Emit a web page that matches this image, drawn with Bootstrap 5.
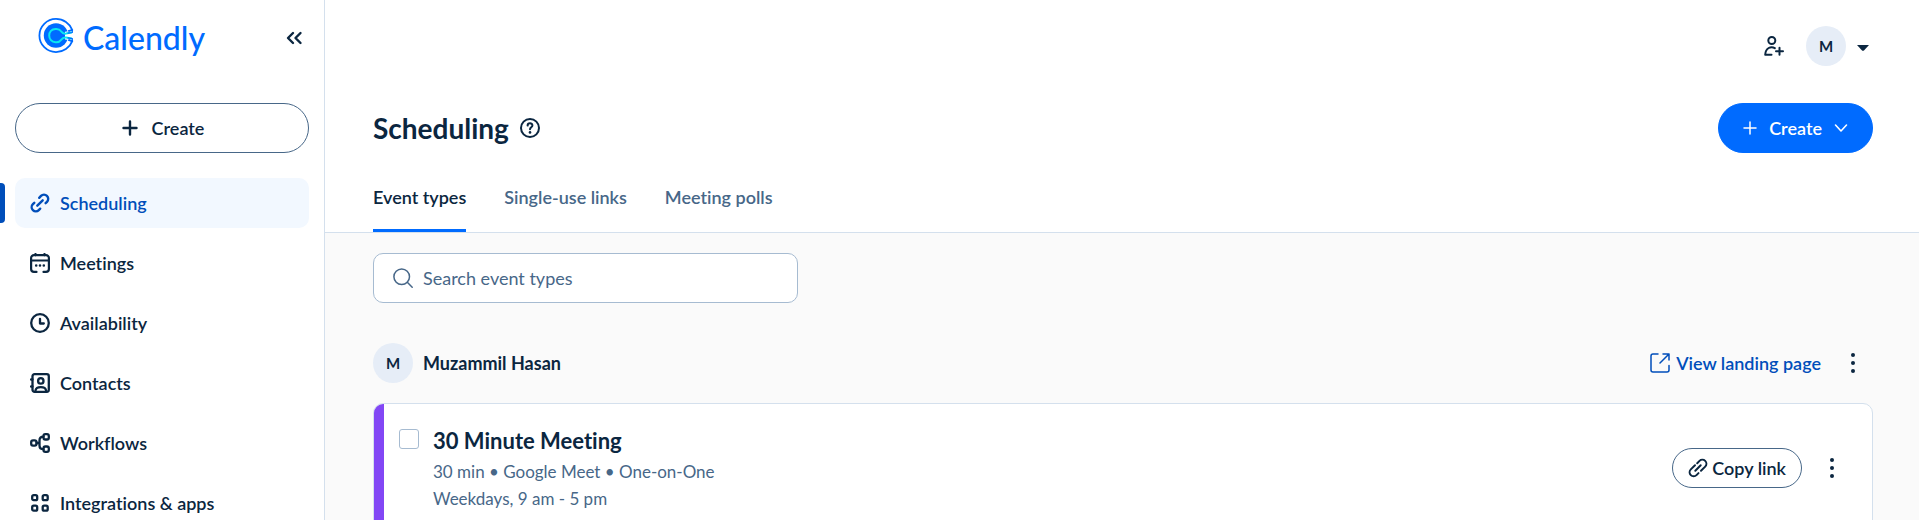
<!DOCTYPE html>
<html lang="en">
<head>
<meta charset="utf-8">
<meta name="viewport" content="width=device-width, initial-scale=1">
<title>Scheduling - Calendly</title>
<link rel="stylesheet" href="https://cdn.jsdelivr.net/npm/bootstrap@5.3.0/dist/css/bootstrap.min.css">
<style>
:root { --navy: #0b2640; --slate: #476788; --blue: #006bff; --deep: #004eba; --line: #d4e0ed; }
body { font-family: Lato, "Liberation Sans", sans-serif; font-size: 18px; line-height: 24px; font-variant-ligatures: none; color: var(--navy); background: #fff; }
svg { display: block; flex: none; fill: none; stroke: currentColor; stroke-linecap: round; stroke-linejoin: round; }
.sidebar { width: 325px; border-right: 1px solid var(--line); padding: 0 15px; }
.brand-row { height: 103px; padding: 18px 6px 0 23px; }
.brand-name { color: var(--blue); font-size: 32px; line-height: 40px; font-weight: 500; text-decoration: none; gap: 8px; }
.collapse-btn, .icon-btn { color: var(--navy); padding: 0; border: 0; background: none; }
.collapse-btn { margin-top: 12px; }
.btn-round { height: 50px; border-radius: 25px; border: 1px solid var(--slate); color: var(--navy); background: #fff; font-size: 18px; font-weight: 600; }
.btn-round.btn-small { height: 40px; gap: 4px; padding: 0 15px; }
.btn-round.btn-blue { background: var(--blue); border-color: var(--blue); color: #fff; padding: 0 24px; gap: 12px; }
.side-nav { margin-top: 25px; gap: 10px; }
.side-nav .nav-link { height: 50px; padding: 0 15px; gap: 10px; color: var(--navy); font-weight: 600; border-radius: 10px; position: relative; }
.side-nav .nav-link.active { background: #f2f8ff; color: var(--deep); }
.side-nav .nav-link.active::before { content: ""; position: absolute; left: -15px; top: 5px; width: 5px; height: 40px; background: var(--deep); border-radius: 0 4px 4px 0; }
.gutter { padding-left: 48px; padding-right: 46px; }
.top-head { border-bottom: 1px solid var(--line); }
.account { padding-top: 26px; padding-bottom: 37px; gap: 22px; }
.initial { width: 40px; height: 40px; border-radius: 50%; background: #e6edf7; font-size: 15px; font-weight: 700; color: var(--navy); }
.page-title { font-size: 28px; line-height: 32px; font-weight: 700; }
.title-group, .owner-name { gap: 10px; }
.tab-row { gap: 38px; margin-top: 32px; }
.tab-row .nav-link { padding: 0 0 20px; border-bottom: 3px solid transparent; color: var(--slate); font-weight: 600; }
.tab-row .nav-link.active { color: var(--navy); border-color: var(--blue); }
.page-body { background: #fafafa; padding-top: 20px; }
.search-box { width: 425px; max-width: 100%; height: 50px; border: 1px solid #a6bbd1; border-radius: 10px; background: #fff; padding: 0 19px; gap: 10px; color: var(--slate); }
.search-box input { border: 0; outline: 0; background: none; min-width: 0; color: var(--navy); }
.search-box input::placeholder { color: var(--slate); opacity: 1; }
.owner-row { margin-top: 40px; margin-bottom: 20px; }
.landing { color: var(--deep); font-weight: 600; text-decoration: none; gap: 6px; margin-right: 22px; }
.event-item { border: 1px solid var(--line); border-radius: 10px; background: #fff; height: 130px; overflow: hidden; }
.event-stripe { width: 10px; background: #8247f5; }
.event-check { width: 20px; height: 20px; margin: 25px 14px 0 15px; border: 1px solid #a6bbd1; border-radius: 3px; background: #fff; appearance: none; }
.event-title { font-size: 22px; line-height: 28px; font-weight: 700; margin: 23px 0 3px; }
.event-meta { color: var(--slate); font-size: 17px; line-height: 27px; margin: 0; }
</style>
</head>
<body>
<div class="d-flex vh-100 overflow-hidden">
  <aside class="sidebar flex-shrink-0 overflow-hidden">
    <div class="brand-row d-flex justify-content-between align-items-start">
      <a class="brand-name d-flex align-items-start" href="#">
        <svg width="37" height="36" viewBox="0 0 37 36" aria-hidden="true">
          <circle cx="18" cy="17.5" r="12.2" fill="#006bff" stroke="none"/>
          <path d="M27 13.800L36 12.500V22.500L27 21.500Z" fill="#fff" stroke="none"/>
          <path d="M31 12.900L34.300 12C31.800 5.500 25.300 .9 18 .9A16.600 16.600 0 0 0 18 34.100C25.300 34.100 31.800 29.500 34.300 23.100L31 22.100" stroke="#006bff" stroke-width="1.800"/>
          <path d="M33.500 14.500L28 15.600C25.500 16 24.500 15.200 23.100 13.300C22 11.700 20.500 11 18.500 11H17.500C13.600 11 11.200 14 11.200 17.500S13.600 24.200 17.500 24.200H18.500C20.500 24.200 22 23.500 23.100 21.900C24.500 20 25.500 19.200 28 19.600L33.500 20.600" stroke="#0ae8f0" stroke-width="2"/>
          <path d="M31 12.900L34.300 12V14.500L30 15.200M31 22.100L34.300 23.100V20.600L30 19.900" stroke="#006bff" stroke-width="1.200"/>
        </svg>
        <span>Calendly</span>
      </a>
      <button class="collapse-btn" type="button" aria-label="Collapse sidebar">
        <svg width="18" height="16" viewBox="0 0 18 16" stroke-width="2.400"><path d="M8 3L3 8L8 13M15.500 3L10.500 8L15.500 13"/></svg>
      </button>
    </div>
    <button class="btn btn-round w-100 d-flex align-items-center justify-content-center gap-2" type="button">
      <svg width="20" height="20" viewBox="0 0 20 20" stroke-width="2.400"><path d="M10 3.500V16.500M3.500 10H16.500"/></svg>
      <span class="ms-1">Create</span>
    </button>
    <nav class="side-nav nav flex-column flex-nowrap">
      <a class="nav-link active d-flex align-items-center" href="#">
        <svg width="20" height="20" viewBox="0 0 20 20" stroke-width="2.400"><path d="M7.300 12.700L12.700 7.300M9.200 4.800L11 2.900A4 4 0 0 1 17 8.800L15.600 10.200M4.300 9.800L2.900 11.200A4 4 0 0 0 8.800 17.100L10.200 15.700"/></svg>
        <span>Scheduling</span>
      </a>
      <a class="nav-link d-flex align-items-center" href="#">
        <svg width="20" height="20" viewBox="0 0 20 20" stroke-width="2.200"><path d="M6.500 18.900H4A2.900 2.900 0 0 1 1.100 16V5A2.900 2.900 0 0 1 4 2.100H16A2.900 2.900 0 0 1 18.900 5V16A2.900 2.900 0 0 1 16 18.900H13.500M1 7.500H19M5.500 1V2.500M14.500 1V2.500"/><path d="M6.200 12.500h.01M10 12.500h.01M13.800 12.500h.01" stroke-width="2.600"/></svg>
        <span>Meetings</span>
      </a>
      <a class="nav-link d-flex align-items-center" href="#">
        <svg width="20" height="20" viewBox="0 0 20 20" stroke-width="2.300"><circle cx="10" cy="10" r="8.800"/><path d="M10 5.800V10.500H13.800"/></svg>
        <span>Availability</span>
      </a>
      <a class="nav-link d-flex align-items-center" href="#">
        <svg width="20" height="20" viewBox="0 0 20 20" stroke-width="2.300"><rect x="2.500" y="1.200" width="16.300" height="17.600" rx="2"/><circle cx="10.800" cy="7.900" r="2.700"/><path d="M5.500 17.500C6.300 13 15.300 13 16.100 17.500M1.100 6.500H2.500M1.100 13.500H2.500"/></svg>
        <span>Contacts</span>
      </a>
      <a class="nav-link d-flex align-items-center" href="#">
        <svg width="20" height="20" viewBox="0 0 20 20" stroke-width="2.300"><rect x="1.200" y="7.300" width="5.300" height="5.300" rx="1.800"/><rect x="13.500" y="1.200" width="5.300" height="5.300" rx="1.800"/><rect x="13.500" y="13.500" width="5.300" height="5.300" rx="1.800"/><path d="M6.500 10H9M13.500 3.700C10.500 3.700 9.500 5 9.500 7.500V12.500C9.500 15 10.500 16.200 13.500 16.200"/></svg>
        <span>Workflows</span>
      </a>
      <a class="nav-link d-flex align-items-center" href="#">
        <svg width="20" height="20" viewBox="0 0 20 20" stroke-width="2.300"><rect x="2.200" y="2.200" width="5" height="5" rx="1.500"/><rect x="12.700" y="2.200" width="5" height="5" rx="1.500"/><rect x="2.200" y="12.700" width="5" height="5" rx="1.500"/><rect x="12.700" y="12.700" width="5" height="5" rx="1.500"/></svg>
        <span>Integrations &amp; apps</span>
      </a>
    </nav>
  </aside>

  <main class="flex-grow-1 d-flex flex-column overflow-hidden">
    <header class="top-head gutter flex-shrink-0">
      <div class="account d-flex justify-content-end align-items-center">
        <button class="icon-btn" type="button" aria-label="Invite user">
          <svg width="20" height="20" viewBox="0 0 20 20" stroke-width="2"><circle cx="7.800" cy="4.500" r="3.500"/><path d="M10.800 12.200C7 9.700 1.500 12 1.200 18.800H7.500M15.500 11.800V18.800M12 15.300H19"/></svg>
        </button>
        <button class="icon-btn d-flex align-items-center me-1" type="button" aria-label="Account menu">
          <span class="initial d-flex align-items-center justify-content-center me-2">M</span>
          <svg width="15" height="12" viewBox="0 0 15 12"><path d="M3 5H15L10.200 10.300Q9 11.300 7.800 10.300Z" fill="currentColor" stroke="none"/></svg>
        </button>
      </div>
      <div class="d-flex justify-content-between align-items-center">
        <div class="title-group d-flex align-items-center">
          <h1 class="page-title mb-0">Scheduling</h1>
          <svg width="22" height="22" viewBox="0 0 22 22" stroke-width="2"><circle cx="11" cy="11" r="9"/><path d="M8.600 8.600C8.700 5.600 13.400 5.600 13.400 8.500C13.400 10.300 11 10.300 11 12.300"/><path d="M11 15.400h.01" stroke-width="2.600"/></svg>
        </div>
        <button class="btn btn-round btn-blue d-flex align-items-center" type="button">
          <svg width="14" height="14" viewBox="0 0 14 14" stroke-width="1.500"><path d="M7 1V13M1 7H13"/></svg>
          <span>Create</span>
          <svg width="14" height="14" viewBox="0 0 14 14" stroke-width="1.600"><path d="M1.500 4L7 10L12.500 4"/></svg>
        </button>
      </div>
      <nav class="tab-row nav">
        <a class="nav-link active" href="#">Event types</a>
        <a class="nav-link" href="#">Single-use links</a>
        <a class="nav-link" href="#">Meeting polls</a>
      </nav>
    </header>

    <section class="page-body gutter flex-grow-1 overflow-hidden">
      <label class="search-box d-flex align-items-center">
        <svg width="20" height="20" viewBox="0 0 20 20" stroke-width="1.500"><circle cx="8.700" cy="8.700" r="7.800"/><path d="M14.300 14.300L19.200 19.200"/></svg>
        <input class="flex-grow-1 p-0" type="search" placeholder="Search event types" aria-label="Search event types">
      </label>

      <div class="owner-row d-flex align-items-center">
        <div class="owner-name d-flex align-items-center me-auto">
          <span class="initial d-flex align-items-center justify-content-center">M</span>
          <span class="fw-bold">Muzammil Hasan</span>
        </div>
        <a class="landing d-flex align-items-center" href="#">
          <svg width="20" height="20" viewBox="0 0 20 20" stroke-width="1.500"><path d="M8 1H3A2 2 0 0 0 1 3V17A2 2 0 0 0 3 19H17A2 2 0 0 0 19 17V12.500M10 10L19 1M13 1H19V7"/></svg>
          <span>View landing page</span>
        </a>
        <button class="icon-btn me-2" type="button" aria-label="More options">
          <svg class="mx-1" width="14" height="20" viewBox="0 0 14 20"><g fill="#0b2640" stroke="none"><circle cx="6" cy="2" r="2"/><circle cx="6" cy="10" r="2"/><circle cx="6" cy="18" r="2"/></g></svg>
        </button>
      </div>

      <article class="event-item d-flex">
        <div class="event-stripe flex-shrink-0"></div>
        <input class="event-check flex-shrink-0" type="checkbox" id="event-30" aria-label="Select 30 Minute Meeting">
        <div class="flex-grow-1">
          <h2 class="event-title"><label for="event-30">30 Minute Meeting</label></h2>
          <p class="event-meta">30 min • Google Meet • One-on-One</p>
          <p class="event-meta">Weekdays, 9 am - 5 pm</p>
        </div>
        <div class="d-flex align-items-center">
          <button class="btn btn-round btn-small d-flex align-items-center" type="button">
            <svg width="20" height="20" viewBox="0 0 20 20" stroke-width="2"><path d="M7.300 12.700L12.700 7.300M9.200 5.200L11.500 2.900A4 4 0 0 1 17.200 8.600L13 12.800M7 7.200L2.800 11.400A4 4 0 0 0 8.500 17.100L10.500 15.100"/></svg>
            <span>Copy link</span>
          </button>
          <button class="icon-btn ms-4 me-4" type="button" aria-label="Event options">
            <svg class="me-2" width="14" height="20" viewBox="0 0 14 20"><g fill="#0b2640" stroke="none"><circle cx="6" cy="2" r="2"/><circle cx="6" cy="10" r="2"/><circle cx="6" cy="18" r="2"/></g></svg>
          </button>
        </div>
      </article>
    </section>
  </main>
</div>
<script src="https://cdn.jsdelivr.net/npm/bootstrap@5.3.0/dist/js/bootstrap.bundle.min.js"></script>
</body>
</html>
